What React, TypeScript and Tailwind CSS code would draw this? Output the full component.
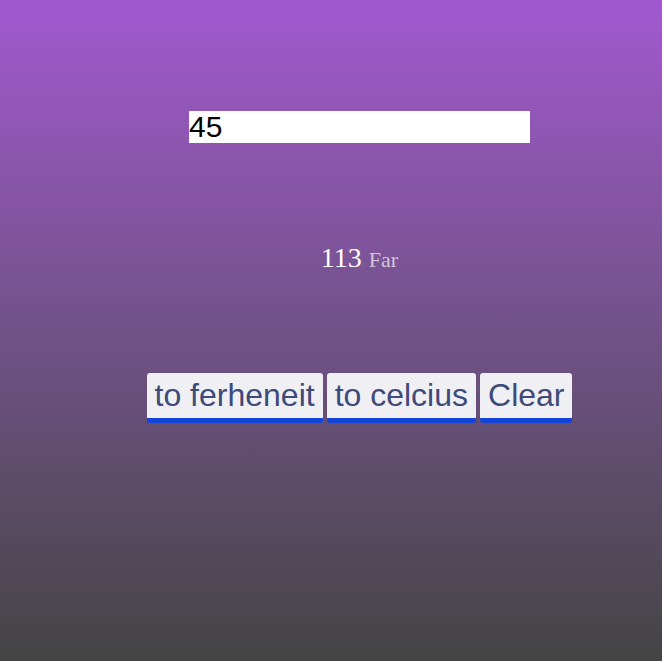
export default function App() {
  return (
    <div className="min-h-screen bg-linear-to-b from-[#a258d0] to-[#444444] pl-[57px] pt-[111px] flex flex-col items-center">
      <input
        type="text"
        defaultValue="45"
        className="w-[341px] h-[32px] bg-white p-0 text-[30px] leading-[32px] text-black outline-none [font-family:'Liberation_Sans',Arial,sans-serif]"
      />
      <div className="mt-[94px] h-[32px] flex items-baseline gap-[7px] [font-family:'Liberation_Serif','Times_New_Roman',serif]">
        <span className="text-[28px] text-white">113</span>
        <span className="text-[22px] text-[#d2c6dc]">Far</span>
      </div>
      <div className="mt-[104px] flex gap-[4px] [font-family:'Liberation_Sans',Arial,sans-serif]">
        {["to ferheneit", "to celcius", "Clear"].map((t) => (
          <button
            key={t}
            className="h-[50px] rounded-[3px] border-b-[5px] border-[#1443d8] bg-[#f0f0f4] px-[8px] text-[32px] leading-[45px] text-[#3e4a78]"
          >
            {t}
          </button>
        ))}
      </div>
    </div>
  );
}
